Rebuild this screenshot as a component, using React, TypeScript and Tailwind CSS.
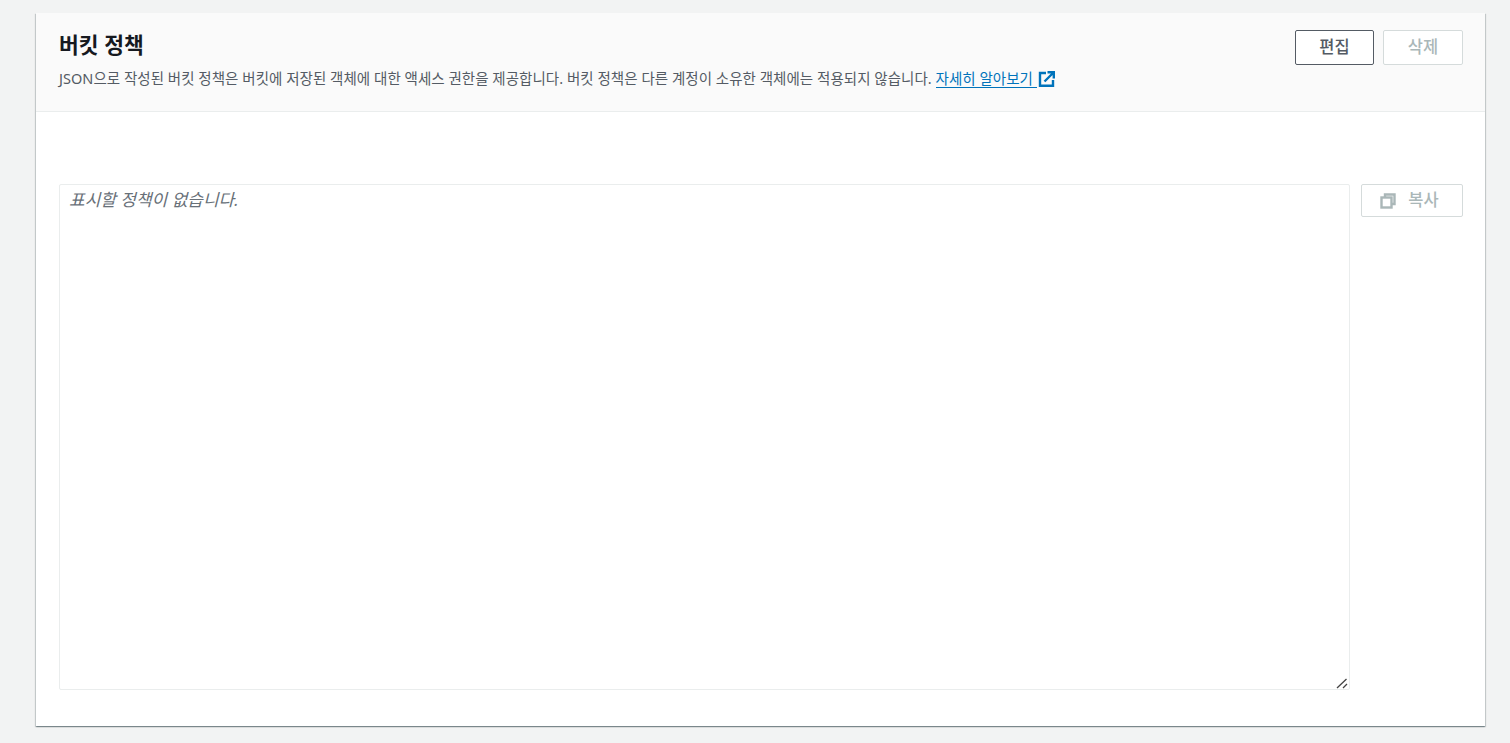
export default function App() {
  const font = "font-['Noto_Sans','Noto_Sans_CJK_KR',sans-serif]";
  return (
    <div className={`min-h-[743px] bg-[#f2f3f3] pt-[13px] pb-[16px] pl-[36px] pr-[25px] ${font}`}>
      <div className="h-[713px] bg-white rounded-none shadow-[0_1px_1px_0_rgba(0,28,36,0.3),1px_1px_1px_0_rgba(0,28,36,0.15),-1px_1px_1px_0_rgba(0,28,36,0.15)]">
        <div className="h-[99px] bg-[#fafafa] border-b border-[#eaeded] pl-[23px] pr-[22px] flex justify-between">
          <div>
            <h2 className="mt-[18px] text-[21.5px] leading-[28px] font-bold text-[#16191f]">버킷 정책</h2>
            <p className="mt-[9px] text-[14.5px] leading-[20px] tracking-[0.03px] text-[#545b64]">
              JSON으로 작성된 버킷 정책은 버킷에 저장된 객체에 대한 액세스 권한을 제공합니다. 버킷 정책은 다른 계정이 소유한 객체에는 적용되지 않습니다.{" "}
              <a className="text-[#0073bb] border-b border-[#0073bb] inline-flex items-center leading-[18px]">자세히 알아보기&nbsp;</a>
              <svg className="inline-block ml-[1px] -mt-[3px] align-middle" width="17" height="16" viewBox="0 0 17 16" fill="none" stroke="#0073bb" strokeWidth="2.4">
                <path d="M8 2H2v12.8h13V9" />
                <path d="M6.5 10.5 15 2M9.5 1.2h6.3v6.3" />
              </svg>
            </p>
          </div>
          <div className="flex gap-[9px] pt-[17px]">
            <button className="w-[79px] h-[35px] rounded-[2px] border border-[#545b64] bg-white text-[16.5px] font-medium text-[#545b64]">편집</button>
            <button className="w-[80px] h-[35px] rounded-[2px] border border-[#d5dbdb] bg-white text-[16.5px] font-medium text-[#aab7b8]">삭제</button>
          </div>
        </div>
        <div className="pt-[72px] pl-[23px] pr-[22px] flex gap-[11px]">
          <div className="relative w-[1291px] h-[506px]">
            <textarea
              readOnly
              placeholder="표시할 정책이 없습니다."
              className="block w-full h-full resize-none border border-[#eaeded] rounded-[2px] bg-white px-[9px] py-[4px] text-[17px] leading-[22px] italic outline-none placeholder:text-[#687078] placeholder:opacity-100"
            />
            <svg className="absolute right-[1px] bottom-[1px]" width="13" height="12" viewBox="0 0 13 12" fill="none" stroke="#444" strokeWidth="1.3">
              <path d="M1 11 10.5 2M7 11l4-4" />
            </svg>
          </div>
          <button className="w-[102px] h-[33px] rounded-[2px] border border-[#d5dbdb] bg-white text-[16.5px] font-medium text-[#aab7b8] flex items-center justify-center gap-[12px] pr-[5px]">
            <svg width="16" height="16" viewBox="0 0 16 16" fill="none" stroke="#aab7b8" strokeWidth="2.4">
              <path d="M5 4V1.5h9.5V11H12" />
              <rect x="1.5" y="4.5" width="10" height="10" />
            </svg>
            복사
          </button>
        </div>
      </div>
    </div>
  );
}
